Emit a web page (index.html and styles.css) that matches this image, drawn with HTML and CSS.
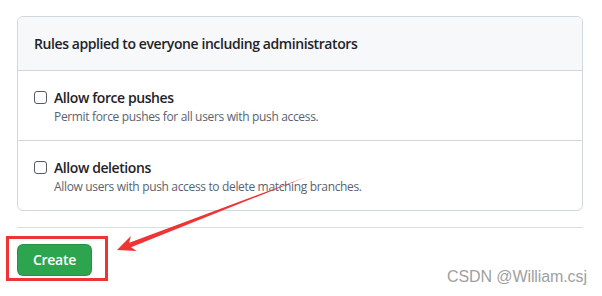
FILE: index.html
```html
<!DOCTYPE html>
<html>
<head>
<meta charset="utf-8">
<link rel="stylesheet" href="styles.css">
</head>
<body>
<div class="page">
  <div class="box">
    <div class="box-header">Rules applied to everyone including administrators</div>
    <div class="box-row">
      <label class="check">
        <input type="checkbox" class="cb">
        <span class="check-body">
          <span class="check-title">Allow force pushes</span>
          <span class="check-note">Permit force pushes for all users with push access.</span>
        </span>
      </label>
    </div>
    <div class="box-row">
      <label class="check">
        <input type="checkbox" class="cb">
        <span class="check-body">
          <span class="check-title">Allow deletions</span>
          <span class="check-note">Allow users with push access to delete matching branches.</span>
        </span>
      </label>
    </div>
  </div>
  <hr class="divider">
  <div class="actions">
    <button class="btn-primary">Create</button>
  </div>
</div>
<svg class="annot" width="602" height="296" viewBox="0 0 602 296">
  <rect x="7.5" y="237.5" width="99" height="42" fill="none" stroke="#ee3434" stroke-width="3"/>
  <polygon points="306,177 129.2,242.7 130.9,236.1 117,250 136.7,251.1 131,247.3" fill="#ee3434"/>
</svg>
<div class="watermark">CSDN @William.csj</div>
</body>
</html>
```
FILE: styles.css
```css
html, body {
  margin: 0;
  padding: 0;
  background: #ffffff;
}
body {
  position: relative;
  width: 602px;
  height: 296px;
  overflow: hidden;
  font-family: "Open Sans", "Noto Sans", "Liberation Sans", sans-serif;
  color: #1f2328;
}
.page {
  padding: 16px 19px 0 17px;
}
.box {
  border: 1px solid #d0d7de;
  border-radius: 6px;
  overflow: hidden;
}
.box-header {
  background: #f6f8fa;
  border-bottom: 1px solid #d0d7de;
  padding: 16px;
  font-size: 14px;
  font-weight: 600;
  line-height: 21px;
  letter-spacing: -0.41px;
}
.box-row {
  padding: 16px 16px 14px;
}
.box-row + .box-row {
  border-top: 1px solid #d0d7de;
}
.check {
  display: flex;
  align-items: flex-start;
  gap: 7px;
}
.cb {
  margin: 4px 0 0 0;
  width: 13px;
  height: 13px;
  appearance: none;
  border: 1px solid #555b63;
  border-radius: 3px;
  background: #fff;
  flex: none;
}
.check-body {
  display: flex;
  flex-direction: column;
}
.check-title {
  font-size: 14px;
  font-weight: 600;
  line-height: 21px;
  letter-spacing: -0.42px;
}
.check-note {
  font-size: 12px;
  line-height: 18px;
  color: #59636e;
  letter-spacing: -0.34px;
}
.divider {
  margin: 16px 0 16px;
  border: 0;
  border-top: 1px solid #d8dee4;
  height: 0;
}
.actions {
  display: flex;
}
.btn-primary {
  font-family: inherit;
  font-size: 14px;
  font-weight: 600;
  line-height: 20px;
  color: #ffffff;
  background: #2da44e;
  border: 1px solid rgba(27, 31, 36, 0.15);
  border-radius: 6px;
  padding: 5px 15px;
  width: 75px;
  height: 32px;
  letter-spacing: -0.3px;
}
.annot {
  position: absolute;
  left: 0;
  top: 0;
  pointer-events: none;
}
.watermark {
  position: absolute;
  left: 447px;
  top: 268px;
  font-family: "Liberation Sans", Arial, sans-serif;
  font-size: 16px;
  line-height: 18px;
  letter-spacing: -0.1px;
  color: #a0a0a0;
}
```
